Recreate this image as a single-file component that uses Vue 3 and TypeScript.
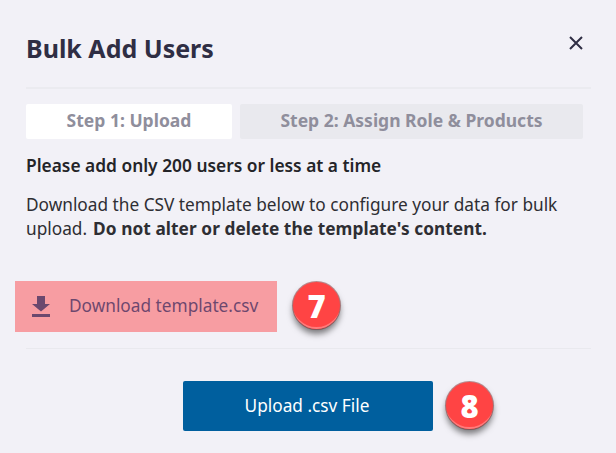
<template>
  <div class="modal">
    <header class="modal__head">
      <h2 class="modal__title">Bulk Add Users</h2>
      <button class="modal__close" aria-label="Close">
        <svg width="16" height="16" viewBox="0 0 16 16">
          <path d="M2 2l12 12M14 2L2 14" stroke="#2f2e44" stroke-width="2" fill="none" />
        </svg>
      </button>
    </header>

    <div class="steps">
      <div
        v-for="step in steps"
        :key="step.label"
        class="step"
        :class="{ 'step--active': step.active }"
      >
        {{ step.label }}
      </div>
    </div>

    <p class="limit">Please add only 200 users or less at a time</p>
    <p class="desc">
      Download the CSV template below to configure your data for bulk upload.
      <strong>Do not alter or delete the template's content.</strong>
    </p>

    <div class="download">
      <a class="download__link">
        <svg width="18" height="21" viewBox="0 0 18 21">
          <path d="M5 0h8v8h5l-9 7.500L0 8h5z" fill="#005f9e" />
          <rect x="0" y="18" width="18" height="3" fill="#005f9e" />
        </svg>
        <span class="download__text">Download template.csv</span>
      </a>
      <span class="download__mask"></span>
      <span class="badge badge--seven">7</span>
    </div>

    <footer class="actions">
      <div class="actions__inner">
        <button class="upload">Upload .csv File</button>
        <span class="badge badge--eight">8</span>
      </div>
    </footer>
  </div>
</template>

<script setup lang="ts">
const steps = [
  { label: 'Step 1: Upload', active: true },
  { label: 'Step 2: Assign Role & Products', active: false }
]
</script>

<style>
html,
body {
  margin: 0;
  background: #f2f1f7;
}
</style>

<style scoped>
.modal {
  width: 616px;
  height: 453px;
  box-sizing: border-box;
  padding: 0 25px 0 26px;
  overflow: hidden;
  font-family: 'Noto Sans', 'Open Sans', sans-serif;
  color: #2f2e44;
  background: #f2f1f7;
}

.modal__head {
  display: flex;
  align-items: center;
  justify-content: space-between;
  height: 87px;
  border-bottom: 2px solid #ebebf0;
}

.modal__title {
  margin: 8px 0 0;
  font-size: 25px;
  line-height: 32px;
  font-weight: 700;
}

.modal__close {
  padding: 0;
  margin: 0 7px 0 0;
  width: 16px;
  height: 16px;
  position: relative;
  top: -1px;
  border: 0;
  background: none;
  display: flex;
}

.steps {
  display: flex;
  gap: 8px;
  margin-top: 15px;
  width: 557px;
}

.step {
  height: 35px;
  line-height: 33px;
  text-align: center;
  font-size: 17.5px;
  font-weight: 700;
  color: #8f8e9c;
  background: #e9e9ee;
  border-radius: 2px;
  flex: 1;
}

.step--active {
  flex: 0 0 206px;
  background: #fff;
}

.limit {
  margin: 14px 0 0;
  font-size: 17.35px;
  line-height: 24px;
  font-weight: 600;
  color: #242428;
}

.desc {
  margin: 16px 0 0;
  font-size: 17.25px;
  line-height: 24px;
  color: #2e2e33;
}

.desc strong {
  margin-left: 1.5px;
  letter-spacing: 0.07px;
  font-weight: 700;
}

.download {
  position: relative;
  height: 51px;
  margin-top: 40px;
}

.download__link {
  display: flex;
  align-items: center;
  gap: 19px;
  height: 100%;
  padding-left: 6px;
  font-size: 17.25px;
  color: #005f9e;
}

.download__text {
  margin-bottom: 3px;
}

.download__mask {
  position: absolute;
  left: -11px;
  top: 0;
  width: 262px;
  height: 51px;
  background: rgba(255, 40, 45, 0.42);
}

.badge {
  position: absolute;
  width: 47px;
  height: 47px;
  border-radius: 50%;
  display: flex;
  align-items: center;
  justify-content: center;
  color: #fff;
  font-family: 'Open Sans', sans-serif;
  font-size: 31px;
  font-weight: 800;
  background: #ff4444;
  box-shadow: 0 0 0 1px rgba(130, 40, 40, 0.5), 0 5px 6px rgba(0, 0, 0, 0.5), inset 0 -3px 0 -1px #ff7b7b;
}

.badge--seven {
  left: 267px;
  top: 1px;
}

.badge--eight {
  left: 263px;
  top: 1px;
}

.actions {
  margin-top: 16px;
  border-top: 1px solid #e9e9ee;
  padding-top: 32px;
  display: flex;
}

.actions__inner {
  position: relative;
  margin-left: 157px;
}

.upload {
  display: block;
  width: 250px;
  height: 50px;
  border: 0;
  border-radius: 2px;
  padding: 0 2px 2px 0;
  background: #005f9e;
  color: #fff;
  font-family: inherit;
  font-size: 17.25px;
}
</style>
